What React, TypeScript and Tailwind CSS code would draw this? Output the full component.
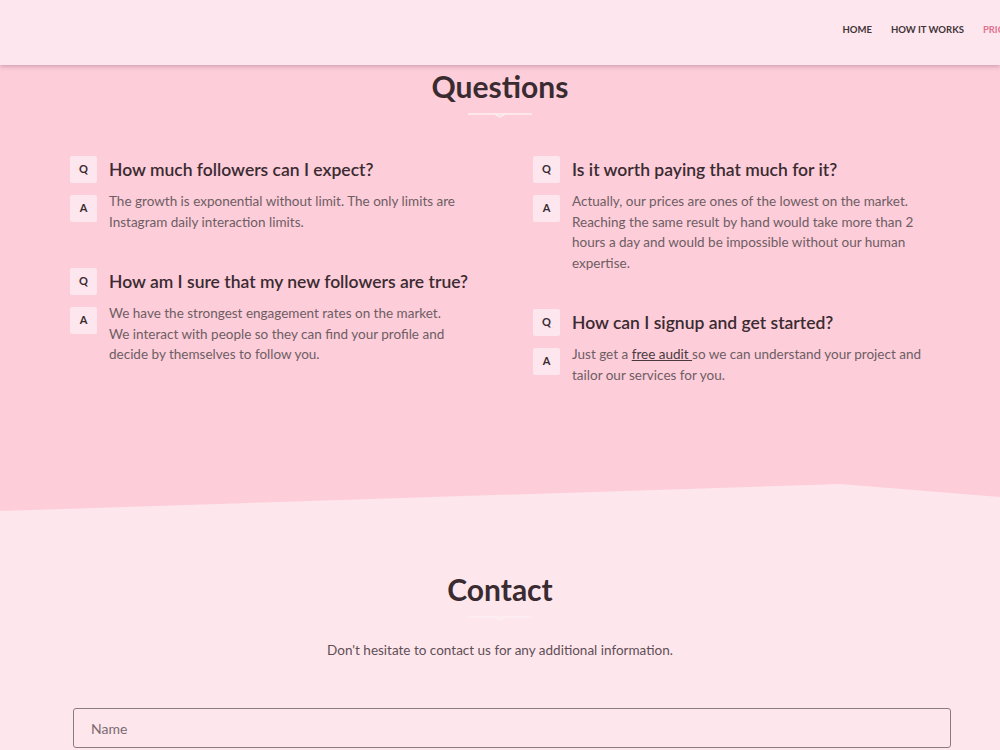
import React from 'react';

const FONT = { fontFamily: 'Lato, "Open Sans", sans-serif' };

const faqLeft = [
  {
    q: 'How much followers can I expect?',
    a: <>The growth is exponential without limit. The only limits are Instagram daily interaction limits.</>,
  },
  {
    q: 'How am I sure that my new followers are true?',
    a: (
      <>
        We have the strongest engagement rates on the market. We interact with people so they can find your profile
        and decide by themselves to follow you.
      </>
    ),
  },
];

const faqRight = [
  {
    q: 'Is it worth paying that much for it?',
    a: (
      <>
        Actually, our prices are ones of the lowest on the market. Reaching the same result by hand would take more
        than 2 hours a day and would be impossible without our human expertise.
      </>
    ),
  },
  {
    q: 'How can I signup and get started?',
    a: (
      <>
        Just get a{' '}
        <a href="#" className="underline text-[#4a3a40]">
          free audit&nbsp;
        </a>
        so we can understand your project and tailor our services for you.
      </>
    ),
  },
];

const Divider: React.FC = () => (
  <svg width="64" height="6" viewBox="0 0 64 6" className="mx-auto block">
    <line x1="0" y1="1" x2="64" y2="1" stroke="#fdeef2" strokeWidth="1.5" />
    <polyline points="27,1 32,4 37,1" fill="none" stroke="#fdeef2" strokeWidth="1.5" />
  </svg>
);

const Badge: React.FC<{ children: React.ReactNode }> = ({ children }) => (
  <div className="w-[27px] h-[27px] shrink-0 bg-[#fde6ed] rounded-[2px] flex items-center justify-center text-[11px] font-bold text-[#3a2b31]">
    {children}
  </div>
);

const FaqItem: React.FC<{ q: string; a: React.ReactNode }> = ({ q, a }) => (
  <div className="mb-[36px]">
    <div className="flex items-center gap-[12px]">
      <Badge>Q</Badge>
      <h3 className="text-[17.5px] font-semibold text-[#3a2b31] leading-tight">{q}</h3>
    </div>
    <div className="flex items-start gap-[12px] mt-[12px]">
      <Badge>A</Badge>
      <p className="w-[352px] text-[13.5px] leading-[20.5px] text-[#6e5d63] -mt-[4px]">{a}</p>
    </div>
  </div>
);

export default function App() {
  return (
    <div className="w-[1000px] h-[750px] overflow-hidden bg-[#fee6ed]" style={FONT}>
      <header className="h-[65px] bg-[#fee6ee] shadow-[0_2px_4px_rgba(150,90,110,0.35)] relative z-10 flex items-center justify-end">
        <nav className="flex items-center gap-[19px] text-[9.5px] font-bold text-[#3e3438] translate-x-[21px] -translate-y-[2px]">
          <a href="#">HOME</a>
          <a href="#">HOW IT WORKS</a>
          <a href="#" className="text-[#e0728f]">PRICING</a>
        </nav>
      </header>

      <section className="relative bg-[#fdcdda] h-[455px] pt-[3px]">
        <h2 className="text-center text-[30px] font-bold text-[#3a2b31] leading-[36px]">Questions</h2>
        <div className="mt-[9px]">
          <Divider />
        </div>
        <div className="ml-[70px] w-[868px] grid grid-cols-2 gap-x-[58px] mt-[37px]">
          <div>
            {faqLeft.map((f) => (
              <FaqItem key={f.q} q={f.q} a={f.a} />
            ))}
          </div>
          <div>
            {faqRight.map((f) => (
              <FaqItem key={f.q} q={f.q} a={f.a} />
            ))}
          </div>
        </div>
        <svg
          className="absolute left-0 bottom-0"
          width="1000"
          height="40"
          viewBox="0 0 1000 40"
          preserveAspectRatio="none"
        >
          <polygon points="0,31 840,4 1000,17 1000,40 0,40" fill="#fee6ed" />
        </svg>
      </section>

      <section className="pt-[51px] px-[73px]">
        <h2 className="text-center text-[30px] font-bold text-[#3a2b31] leading-[36px]">Contact</h2>
        <div className="mt-[9px]">
          <Divider />
        </div>
        <p className="text-center text-[13.5px] text-[#5e4f55] mt-[18px]">
          Don't hesitate to contact us for any additional information.
        </p>
        <input
          type="text"
          placeholder="Name"
          className="mt-[48px] w-[878px] h-[40px] border border-[#8a7d82] rounded-[3px] bg-transparent px-[17px] text-[14px] placeholder:text-[#7a6b71] outline-none"
        />
      </section>
    </div>
  );
}
